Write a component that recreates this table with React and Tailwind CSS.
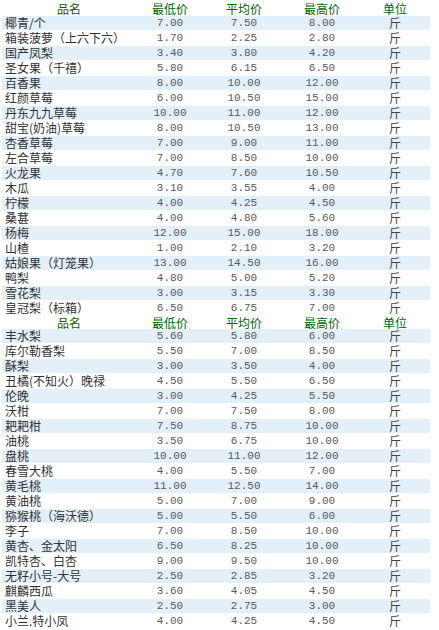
import React from 'react';

const cols = ['品名', '最低价', '平均价', '最高价', '单位'];

const fruitsA = [
  ['椰青/个', '7.00', '7.50', '8.00'],
  ['箱装菠萝（上六下六）', '1.70', '2.25', '2.80'],
  ['国产凤梨', '3.40', '3.80', '4.20'],
  ['圣女果（千禧）', '5.80', '6.15', '6.50'],
  ['百香果', '8.00', '10.00', '12.00'],
  ['红颜草莓', '6.00', '10.50', '15.00'],
  ['丹东九九草莓', '10.00', '11.00', '12.00'],
  ['甜宝(奶油)草莓', '8.00', '10.50', '13.00'],
  ['杏香草莓', '7.00', '9.00', '11.00'],
  ['左合草莓', '7.00', '8.50', '10.00'],
  ['火龙果', '4.70', '7.60', '10.50'],
  ['木瓜', '3.10', '3.55', '4.00'],
  ['柠檬', '4.00', '4.25', '4.50'],
  ['桑葚', '4.00', '4.80', '5.60'],
  ['杨梅', '12.00', '15.00', '18.00'],
  ['山楂', '1.00', '2.10', '3.20'],
  ['姑娘果（灯笼果）', '13.00', '14.50', '16.00'],
  ['鸭梨', '4.80', '5.00', '5.20'],
  ['雪花梨', '3.00', '3.15', '3.30'],
  ['皇冠梨（标箱）', '6.50', '6.75', '7.00'],
];

const fruitsB = [
  ['丰水梨', '5.60', '5.80', '6.00'],
  ['库尔勒香梨', '5.50', '7.00', '8.50'],
  ['酥梨', '3.00', '3.50', '4.00'],
  ['丑橘(不知火）晚禄', '4.50', '5.50', '6.50'],
  ['伦晚', '3.00', '4.25', '5.50'],
  ['沃柑', '7.00', '7.50', '8.00'],
  ['耙耙柑', '7.50', '8.75', '10.00'],
  ['油桃', '3.50', '6.75', '10.00'],
  ['盘桃', '10.00', '11.00', '12.00'],
  ['春雪大桃', '4.00', '5.50', '7.00'],
  ['黄毛桃', '11.00', '12.50', '14.00'],
  ['黄油桃', '5.00', '7.00', '9.00'],
  ['猕猴桃（海沃德）', '5.00', '5.50', '6.00'],
  ['李子', '7.00', '8.50', '10.00'],
  ['黄杏、金太阳', '6.50', '8.25', '10.00'],
  ['凯特杏、白杏', '9.00', '9.50', '10.00'],
  ['无籽小号-大号', '2.50', '2.85', '3.20'],
  ['麒麟西瓜', '3.60', '4.05', '4.50'],
  ['黑美人', '2.50', '2.75', '3.00'],
  ['小兰.特小凤', '4.00', '4.25', '4.50'],
];

const grid = 'grid grid-cols-[134px_68px_80px_76px_70px]';
const cjk = { fontFamily: '"Noto Sans CJK SC", "Noto Sans", sans-serif' };

// 表头：第一张表略高，后面的表头矮一点
function Header({ tall }) {
  return (
    <div className={`${grid} ${tall ? 'h-[15px] pt-[2px] leading-[13px]' : 'h-[13px] pt-[2px] leading-[11px]'} text-[12px] text-[#006600]`}>
      {cols.map(c => (
        <div key={c} className="text-center whitespace-nowrap">{c}</div>
      ))}
    </div>
  );
}

function Row({ item, striped }) {
  return (
    <div className="h-[15px] pt-[1px]">
      <div className={`${grid} h-[14px] leading-[14px] ${striped ? 'bg-[#e3eff9]' : ''}`}>
        <div className="pl-[3px] text-[12px] text-[#333] whitespace-nowrap">{item[0]}</div>
        {item.slice(1).map((v, i) => (
          <div key={i} className="text-center text-[11px] text-[#5a5a5a]" style={{ fontFamily: '"Liberation Mono", monospace' }}>{v}</div>
        ))}
        <div className="text-center text-[12px] text-[#444]">斤</div>
      </div>
    </div>
  );
}

export default function App() {
  return (
    <div className="w-[439px] h-[630px] overflow-hidden bg-white" style={cjk}>
      <div className="pl-[2px] w-[430px]">
        <Header tall />
        {fruitsA.map((f, i) => <Row key={f[0]} item={f} striped={i % 2 === 0} />)}
        <Header />
        {fruitsB.map((f, i) => <Row key={f[0]} item={f} striped={i % 2 === 0} />)}
        <Header />
      </div>
    </div>
  );
}
